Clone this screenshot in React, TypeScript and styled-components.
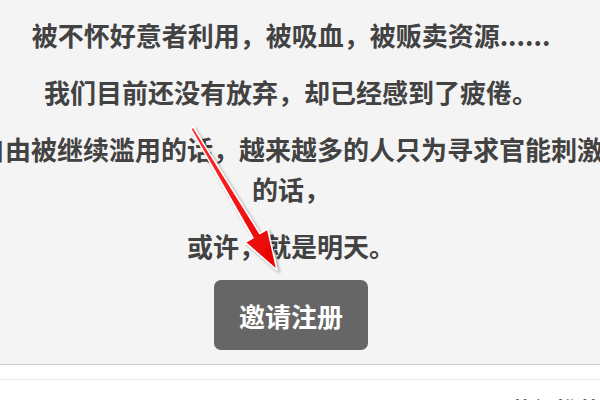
import React from 'react';
import styled, { createGlobalStyle } from 'styled-components';

const GlobalStyle = createGlobalStyle`
  html, body {
    margin: 0;
    padding: 0;
    background: #ffffff;
  }
  body {
    font-family: "Noto Sans CJK SC", "Noto Sans", "Liberation Sans", sans-serif;
  }
`;

const Page = styled.div`
  position: relative;
  width: 600px;
  height: 400px;
  overflow: hidden;
`;

const Notice = styled.section`
  display: flex;
  flex-direction: column;
  align-items: center;
  padding: 15px 18px 14px 0;
  background: #f4f4f4;
  border-bottom: 1px solid #c9c9c9;
`;

const Line = styled.p<{ $last?: boolean }>`
  flex-shrink: 0;
  width: 632px;
  margin: 0 0 ${({ $last }) => ($last ? '14px' : '17px')};
  font-size: 26px;
  font-weight: 700;
  line-height: 40px;
  text-align: center;
  color: #424242;
`;

const InviteButton = styled.button`
  height: 70px;
  padding: 0 25px;
  border: none;
  border-radius: 7px;
  background: #666666;
  color: #ffffff;
  font-family: inherit;
  font-size: 26px;
  font-weight: 700;
  cursor: pointer;
`;

const Spacer = styled.div`
  height: 14px;
  border-bottom: 1px solid #e8e8e8;
`;

const NextTitle = styled.div`
  padding-top: 13px;
  text-align: right;
  font-size: 22px;
  font-weight: 700;
  line-height: 30px;
  color: #333333;
  white-space: nowrap;
`;

const Overlay = styled.svg`
  position: absolute;
  left: 0;
  top: 0;
  pointer-events: none;
`;

// screenshot annotation arrow drawn over the text
const Arrow = () => (
  <Overlay width="600" height="400" viewBox="0 0 600 400">
    <defs>
      <linearGradient id="arrowRed" x1="0" y1="0" x2="1" y2="1">
        <stop offset="0%" stopColor="#ff3030" />
        <stop offset="100%" stopColor="#e80000" />
      </linearGradient>
      <filter id="arrowShadow" x="-20%" y="-20%" width="140%" height="140%">
        <feDropShadow dx="2" dy="2" stdDeviation="1.5" floodColor="#000" floodOpacity="0.35" />
      </filter>
    </defs>
    <polygon
      points="190.7,128.8 253,237.8 245.2,242.4 277,270 267.6,229 259.8,233.6 193.3,127.2"
      fill="url(#arrowRed)"
      stroke="#ffffff"
      strokeWidth="1.5"
      strokeLinejoin="round"
      filter="url(#arrowShadow)"
    />
  </Overlay>
);

const App: React.FC = () => (
  <>
    <GlobalStyle />
    <Page>
      <Notice>
        <Line>被不怀好意者利用，被吸血，被贩卖资源......</Line>
        <Line>我们目前还没有放弃，却已经感到了疲倦。</Line>
        <Line>自由被继续滥用的话，越来越多的人只为寻求官能刺激的话，</Line>
        <Line $last>或许，就是明天。</Line>
        <InviteButton>邀请注册</InviteButton>
      </Notice>
      <Spacer />
      <NextTitle>热门推荐</NextTitle>
      <Arrow />
    </Page>
  </>
);

export default App;
